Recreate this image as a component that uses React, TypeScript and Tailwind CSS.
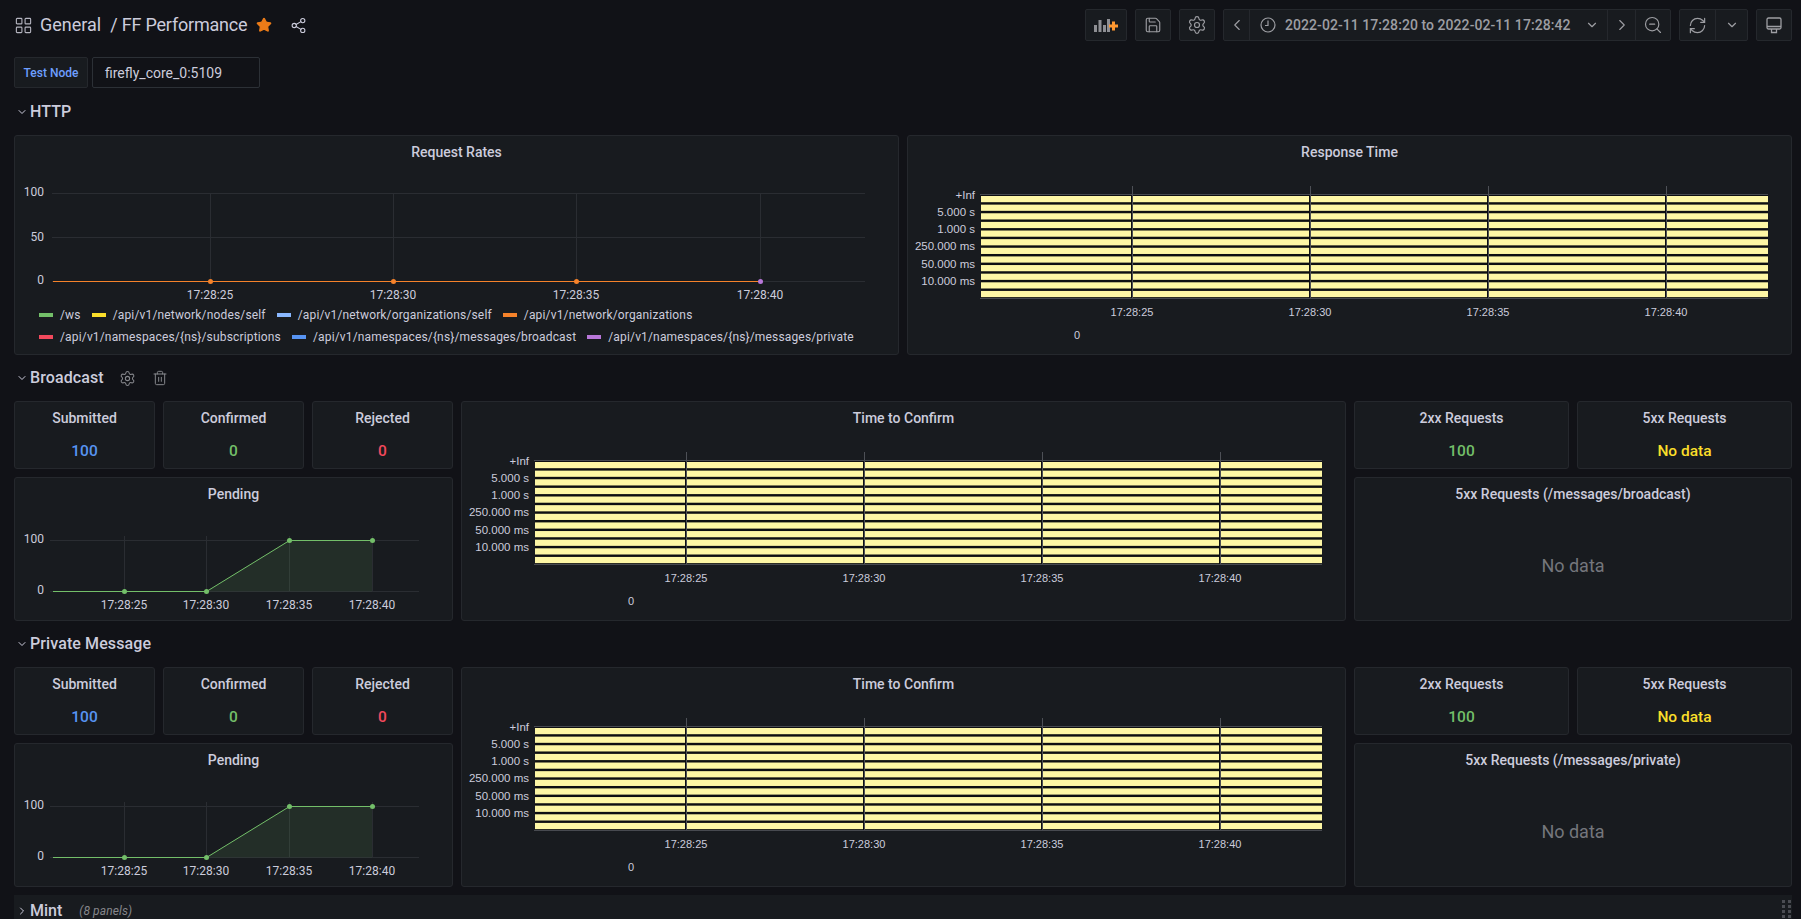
import { ChevronDown, ChevronLeft, ChevronRight, LayoutGrid, RefreshCw, Save, Settings, Share2, Star, Trash2, ZoomOut } from "lucide-react";
import type { ReactNode } from "react";

const legendRows = [
  [
    { color: "bg-[#73bf69]", label: "/ws" },
    { color: "bg-[#fade2a]", label: "/api/v1/network/nodes/self" },
    { color: "bg-[#8ab8ff]", label: "/api/v1/network/organizations/self" },
    { color: "bg-[#f5822a]", label: "/api/v1/network/organizations" },
  ],
  [
    { color: "bg-[#f2495c]", label: "/api/v1/namespaces/{ns}/subscriptions" },
    { color: "bg-[#5794f2]", label: "/api/v1/namespaces/{ns}/messages/broadcast" },
    { color: "bg-[#b877d9]", label: "/api/v1/namespaces/{ns}/messages/private" },
  ],
];

const heatTicks = [
  { x: 225, label: "17:28:25" },
  { x: 403, label: "17:28:30" },
  { x: 581, label: "17:28:35" },
  { x: 759, label: "17:28:40" },
];

const heatLabels = [
  { y: 60, label: "+Inf" },
  { y: 77, label: "5.000 s" },
  { y: 94, label: "1.000 s" },
  { y: 111, label: "250.000 ms" },
  { y: 129, label: "50.000 ms" },
  { y: 146, label: "10.000 ms" },
];

const heatEdges = [74, 226, 404, 582, 760, 861];
const heatRows = Array.from({ length: 12 }, (_, i) => 61 + i * 8.63);

function Panel({ title, className, children }: { title: string; className?: string; children: ReactNode }) {
  return (
    <div className={`flex flex-col overflow-hidden rounded-[3px] border border-[#25282d] bg-[#181b1f] ${className ?? ""}`}>
      <div className="flex h-[34px] shrink-0 items-center justify-center pb-[2px] text-sm font-medium text-[#ccccdc]">{title}</div>
      {children}
    </div>
  );
}

// coordinates below are relative to the panel box, the group shifts them past the title
function ChartSvg({ height, children }: { height: number; children: ReactNode }) {
  return (
    <svg className="block w-full shrink-0 overflow-visible" height={height}>
      <g transform="translate(-1 -35)">{children}</g>
    </svg>
  );
}

function Heatmap() {
  return (
    <ChartSvg height={180}>
      <g className="fill-[#ccccdc] text-[11px] [font-family:'Liberation_Sans',sans-serif]">
        {heatLabels.map(({ y, label }) => (
          <text key={label} x={68} y={y} textAnchor="end" dominantBaseline="central" className="text-[11.5px]">
            {label}
          </text>
        ))}
        {heatTicks.map(({ x, label }) => (
          <text key={label} x={x} y={177} textAnchor="middle" dominantBaseline="central">
            {label}
          </text>
        ))}
        <text x={170} y={200} textAnchor="middle" dominantBaseline="central">
          0
        </text>
      </g>
      <rect x={74} y={59} width={787} height={104} fill="#0e0f12" />
      {heatRows.map((y) =>
        heatEdges.slice(0, -1).map((x0, i) => (
          <rect key={`${y}-${x0}`} x={x0} y={y} width={heatEdges[i + 1] - x0 - (i < 4 ? 2 : 0)} height={6.2} fill="#fef7a5" />
        )),
      )}
      <path d="M73 59.5H861M73 163.5H861" stroke="#474a50" />
      {heatTicks.map(({ x }) => (
        <path key={x} d={`M${x}.5 51V163`} stroke="#4d5056" />
      ))}
    </ChartSvg>
  );
}

function RequestChart() {
  return (
    <ChartSvg height={134}>
      <path d="M38 58.5H851M38 102.5H851M38 146.5H851" stroke="#2a2d32" />
      {heatTicks.map((_, i) => (
        <path key={i} d={`M${[196, 379, 562, 746][i]}.5 58V146`} stroke="#2a2d32" />
      ))}
      <path d="M39 146.5H746" stroke="#f5822a" />
      {[196, 379, 562].map((x) => (
        <circle key={x} cx={x + 0.5} cy={146.5} r={2.5} fill="#f5822a" />
      ))}
      <circle cx={746.5} cy={146.5} r={2.5} fill="#b877d9" />
      <g className="fill-[#ccccdc] text-xs">
        <text x={30} y={57} textAnchor="end" dominantBaseline="central">100</text>
        <text x={30} y={101.5} textAnchor="end" dominantBaseline="central">50</text>
        <text x={30} y={145} textAnchor="end" dominantBaseline="central">0</text>
        {heatTicks.map(({ label }, i) => (
          <text key={label} x={[196, 379, 562, 746][i]} y={160} textAnchor="middle" dominantBaseline="central">
            {label}
          </text>
        ))}
      </g>
    </ChartSvg>
  );
}

function PendingChart() {
  const points = [
    { x: 110, y: 114 },
    { x: 192, y: 114 },
    { x: 275, y: 63 },
    { x: 358, y: 63 },
  ];
  return (
    <ChartSvg height={107}>
      <path d="M36 63.5H405M36 114.5H405" stroke="#2a2d32" />
      {points.map(({ x }) => (
        <path key={x} d={`M${x}.5 59V114`} stroke="#2a2d32" />
      ))}
      <path d="M192 114.5L275 63.5H358V114.5Z" fill="#73bf69" fillOpacity={0.12} />
      <path d="M39 114.5H192.5L275.5 63.5H358.5" fill="none" stroke="#73bf69" />
      {points.map(({ x, y }) => (
        <circle key={x} cx={x + 0.5} cy={y + 0.5} r={2.5} fill="#73bf69" />
      ))}
      <g className="fill-[#ccccdc] text-xs">
        <text x={30} y={62} textAnchor="end" dominantBaseline="central">100</text>
        <text x={30} y={113} textAnchor="end" dominantBaseline="central">0</text>
        {heatTicks.map(({ label }, i) => (
          <text key={label} x={points[i].x} y={128} textAnchor="middle" dominantBaseline="central">
            {label}
          </text>
        ))}
      </g>
    </ChartSvg>
  );
}

function Stat({ title, value, color }: { title: string; value: string; color: string }) {
  return (
    <Panel title={title}>
      <div className={`-mt-px text-center text-[15.5px] leading-8 font-medium ${color}`}>{value}</div>
    </Panel>
  );
}

function RowTitle({ title, children }: { title: string; children?: ReactNode }) {
  return (
    <div className="mb-3 flex h-6 items-center pt-[2px] pl-0.5 text-base font-medium tracking-[0.1px] text-[#ccccdc]">
      <ChevronDown size={12} strokeWidth={2} className="mr-0.5" />
      {title}
      {children}
    </div>
  );
}

function MessageRow({ noDataTitle }: { noDataTitle: string }) {
  return (
    <div className="grid grid-cols-[141px_141px_141px_885px_215px_215px] grid-rows-[68px_144px] gap-2">
      <Stat title="Submitted" value="100" color="text-[#5794f2]" />
      <Stat title="Confirmed" value="0" color="text-[#73bf69]" />
      <Stat title="Rejected" value="0" color="text-[#f2495c]" />
      <Panel title="Time to Confirm" className="row-span-2">
        <Heatmap />
      </Panel>
      <Stat title="2xx Requests" value="100" color="text-[#73bf69]" />
      <Stat title="5xx Requests" value="No data" color="text-[#fade2a]" />
      <Panel title="Pending" className="col-span-3">
        <PendingChart />
      </Panel>
      <Panel title={noDataTitle} className="col-span-2">
        <div className="flex flex-1 items-center justify-center text-lg text-[#74767c]">No data</div>
      </Panel>
    </div>
  );
}

function ToolButton({ className, children }: { className?: string; children: ReactNode }) {
  return <div className={`flex h-full items-center justify-center ${className ?? ""}`}>{children}</div>;
}

const toolBox = "flex h-[32px] items-center rounded-[2px] border border-[#25282d] bg-[#181b1f] text-[#9d9ea3]";

export default function App() {
  return (
    <div className="h-[919px] overflow-hidden bg-[#111217] pr-[9px] pl-[14px] [font-family:Roboto,sans-serif] text-[#ccccdc]">
      {/* Top bar */}
      <div className="flex justify-between pt-[9px]">
        <div className="flex h-[32px] items-center text-lg">
          <LayoutGrid size={19} strokeWidth={1.4} className="text-[#b5b5c0]" />
          <span className="ml-[7px]">General</span>
          <span className="ml-[9px] tracking-[-0.2px]">/ FF Performance</span>
          <Star size={16} fill="#eb7b18" stroke="#eb7b18" className="ml-[9px]" />
          <Share2 size={17} strokeWidth={1.5} className="ml-[18px]" />
        </div>
        <div className="flex gap-2">
          <div className={`${toolBox} w-[42px] justify-center`}>
            <svg width="25" height="15" viewBox="0 0 25 15">
              <path d="M0 7h3v7H0zM4.5 2h3v12h-3zM9 7h3v7H9zM13 1h3v13h-3z" fill="#8e8f94" />
              <path d="M19.5 3.5v9M15 8h9" stroke="#ff9830" strokeWidth="3" />
            </svg>
          </div>
          <div className={`${toolBox} w-9 justify-center`}>
            <Save size={18} strokeWidth={1.5} />
          </div>
          <div className={`${toolBox} w-9 justify-center`}>
            <Settings size={20} strokeWidth={1.4} />
          </div>
          <div className={`${toolBox} w-[448px] divide-x divide-[#25282d]`}>
            <ToolButton className="w-[26px]">
              <ChevronLeft size={18} strokeWidth={1.5} />
            </ToolButton>
            <ToolButton className="w-[358px] justify-start gap-[9px] pl-[10px] text-sm font-medium tracking-[0.06px]">
              <svg width="16" height="16" viewBox="0 0 16 16" fill="none" stroke="currentColor" strokeWidth="1.2">
                <circle cx="8" cy="8" r="7" />
                <path d="M8 3.5V8.5H5" />
              </svg>
              2022-02-11 17:28:20 to 2022-02-11 17:28:42
              <ChevronDown size={14} className="ml-[6px]" />
            </ToolButton>
            <ToolButton className="w-[28px]">
              <ChevronRight size={18} strokeWidth={1.5} />
            </ToolButton>
            <ToolButton className="flex-1">
              <ZoomOut size={20} strokeWidth={1.4} />
            </ToolButton>
          </div>
          <div className={`${toolBox} w-[69px] divide-x divide-[#25282d]`}>
            <ToolButton className="w-[36px]">
              <RefreshCw size={19} strokeWidth={1.5} />
            </ToolButton>
            <ToolButton className="flex-1">
              <ChevronDown size={14} />
            </ToolButton>
          </div>
          <div className={`${toolBox} w-9 justify-center`}>
            <svg width="16" height="17" viewBox="0 0 16 17" fill="none" stroke="currentColor" strokeWidth="1.3">
              <rect x="1" y="1" width="14" height="11" rx="1.5" />
              <path d="M1 9.5H15M5.5 12V15.5H10.5V12" />
            </svg>
          </div>
        </div>
      </div>

      {/* Variables */}
      <div className="mt-4 flex h-[31px] gap-1">
        <div className="flex w-[74px] items-center justify-center rounded-[2px] border border-[#25282d] bg-[#181b1f] text-xs font-medium text-[#6e9fff]">
          Test Node
        </div>
        <div className="flex w-[168px] items-center rounded-[2px] border border-[#2c3036] pl-3 text-sm">firefly_core_0:5109</div>
      </div>

      <div className="mt-[11px]">
        <RowTitle title="HTTP" />
      </div>
      <div className="grid h-[220px] grid-cols-2 gap-2">
        <Panel title="Request Rates">
          <RequestChart />
          <div className="pl-6 text-xs tracking-[0.16px] text-[#ccccdc]">
            {legendRows.map((row, i) => (
              <div key={i} className="flex h-[22px] items-center gap-[11px]">
                {row.map(({ color, label }) => (
                  <div key={label} className="flex items-center gap-[7px]">
                    <span className={`h-1 w-3.5 ${color}`} />
                    {label}
                  </div>
                ))}
              </div>
            ))}
          </div>
        </Panel>
        <Panel title="Response Time">
          <Heatmap />
        </Panel>
      </div>

      <div className="mt-2.5">
        <RowTitle title="Broadcast">
          <Settings size={17} strokeWidth={1.5} className="ml-[15px] text-[#85868b]" />
          <Trash2 size={16} strokeWidth={1.5} className="ml-[16px] text-[#85868b]" />
        </RowTitle>
      </div>
      <MessageRow noDataTitle="5xx Requests (/messages/broadcast)" />

      <div className="mt-2.5">
        <RowTitle title="Private Message" />
      </div>
      <MessageRow noDataTitle="5xx Requests (/messages/private)" />

      {/* Collapsed row */}
      <div className="relative mt-2 flex h-[30px] items-center bg-[#181b1f] pt-[2px] pl-0.5 text-base font-medium">
        <ChevronRight size={12} strokeWidth={2} className="mr-0.5" />
        Mint
        <span className="ml-[17px] text-xs font-normal tracking-[0.1px] text-[#85868b] italic">(8 panels)</span>
        <div className="absolute top-[5px] right-[1px] grid grid-cols-2 gap-x-[3px] gap-y-[2px]">
          {Array.from({ length: 8 }, (_, i) => (
            <span key={i} className="h-[3px] w-[3px] bg-[#4a4c52]" />
          ))}
        </div>
      </div>
    </div>
  );
}
